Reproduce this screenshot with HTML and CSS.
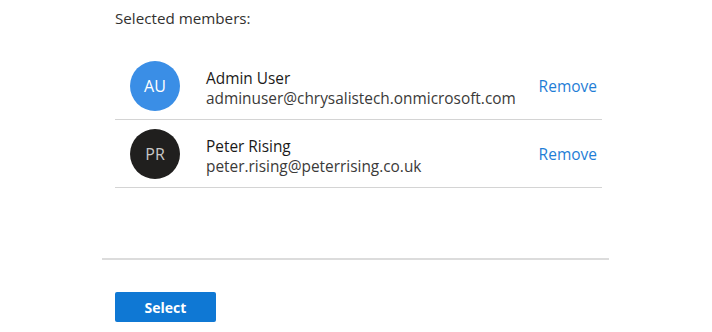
FILE: index.html
```html
<!DOCTYPE html>
<html lang="en">
<head>
    <meta charset="UTF-8">
    <title>Selected members</title>
    <link rel="stylesheet" href="styles.css">
</head>
<body>
    <div class="panel">
        <div class="members">
            <p class="heading">Selected members:</p>

            <div class="member">
                <div class="avatar avatar-blue">AU</div>
                <div class="info">
                    <div class="name">Admin User</div>
                    <div class="email">adminuser@chrysalistech.onmicrosoft.com</div>
                </div>
                <a class="remove" href="#">Remove</a>
            </div>

            <div class="member">
                <div class="avatar avatar-dark">PR</div>
                <div class="info">
                    <div class="name">Peter Rising</div>
                    <div class="email">peter.rising@peterrising.co.uk</div>
                </div>
                <a class="remove" href="#">Remove</a>
            </div>
        </div>

        <div class="footer">
            <button type="button" class="select-button">Select</button>
        </div>
    </div>
</body>
</html>
```

FILE: styles.css
```css
body {
    font-family: 'Open Sans', 'Noto Sans', sans-serif;
    background-color: #ffffff;
    color: #323130;
    margin: 0;
    padding: 0;
}

.panel {
    width: 507px;
    margin-left: 102px;
}

.members {
    padding-left: 13px;
    width: 487px;
    height: 156px;
    padding-top: 10px;
    padding-bottom: 92px;
}

.heading {
    font-size: 15.2px;
    margin: 0 0 25px 0;
    line-height: 17px;
}

.member {
    display: flex;
    align-items: center;
    padding: 9px 5px 8px 15px;
    border-bottom: 1px solid #d4d4d4;
}

.avatar {
    width: 50px;
    height: 50px;
    border-radius: 50%;
    display: flex;
    align-items: center;
    justify-content: center;
    font-size: 16px;
    flex-shrink: 0;
}

.avatar-blue {
    background-color: #3a8ee6;
    color: #ffffff;
}

.avatar-dark {
    background-color: #201f1e;
    color: #c8c8c8;
}

.info {
    flex: 1;
    margin-left: 26px;
    font-size: 15.4px;
    line-height: 20px;
    margin-top: 5px;
}

.name {
    color: #1b1a19;
    font-weight: 500;
}

.email {
    color: #3b3a39;
}

.remove {
    color: #1f7ed6;
    text-decoration: none;
    font-size: 15.5px;
    margin-top: -1px;
}

.footer {
    border-top: 2px solid #dcdcdc;
    padding: 32px 0 0 13px;
}

.select-button {
    background-color: #0f78d4;
    color: #ffffff;
    border: none;
    border-radius: 2px;
    width: 101px;
    height: 30px;
    font-family: inherit;
    font-size: 14px;
    font-weight: bold;
    cursor: pointer;
}
```
